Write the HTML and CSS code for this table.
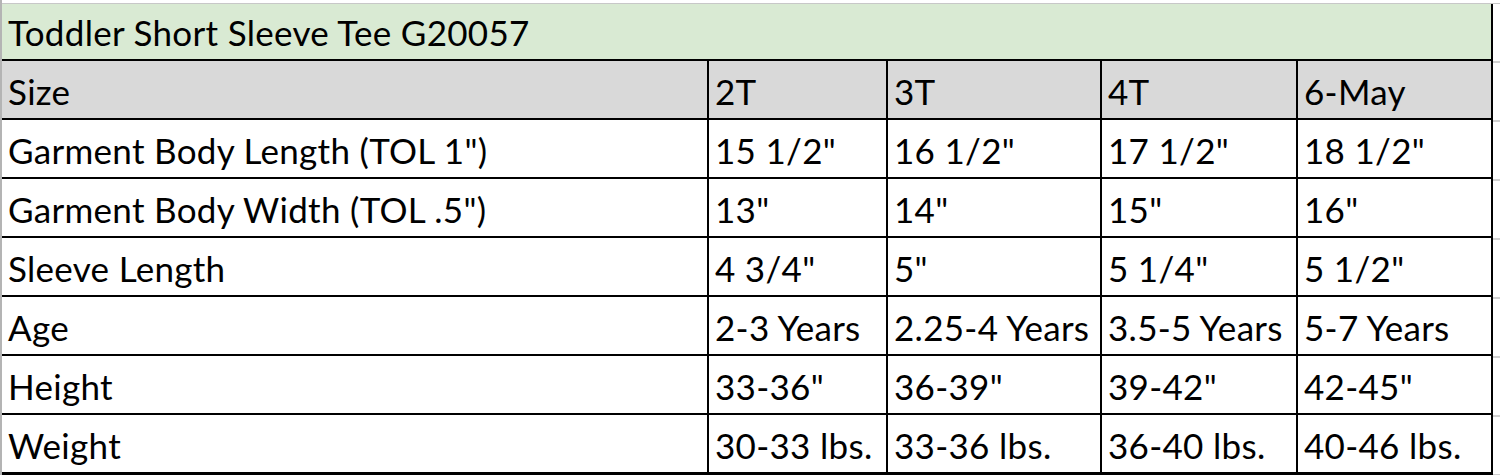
FILE: index.html
```html
<!DOCTYPE html>
<html lang="en">
<head>
    <meta charset="UTF-8">
    <meta name="viewport" content="width=device-width, initial-scale=1.0">
    <link rel="stylesheet" href="styles.css">
    <title>Toddler Short Sleeve Tee G20057</title>
</head>
<body>
    <div class="sheet">
        <div class="grid-top"></div>
        <div class="sheet-body">
            <table class="chart">
                <colgroup>
                    <col class="colLabel">
                    <col class="col2t">
                    <col class="col3t">
                    <col class="col4t">
                    <col class="col6">
                </colgroup>
                <tr class="title-row">
                    <td colspan="5">Toddler Short Sleeve Tee G20057</td>
                </tr>
                <tr class="head-row">
                    <td>Size</td>
                    <td>2T</td>
                    <td>3T</td>
                    <td>4T</td>
                    <td>6-May</td>
                </tr>
                <tr>
                    <td>Garment Body Length (TOL 1")</td>
                    <td>15 1/2"</td>
                    <td>16 1/2"</td>
                    <td>17 1/2"</td>
                    <td>18 1/2"</td>
                </tr>
                <tr>
                    <td>Garment Body Width (TOL .5")</td>
                    <td>13"</td>
                    <td>14"</td>
                    <td>15"</td>
                    <td>16"</td>
                </tr>
                <tr>
                    <td>Sleeve Length</td>
                    <td>4 3/4"</td>
                    <td>5"</td>
                    <td>5 1/4"</td>
                    <td>5 1/2"</td>
                </tr>
                <tr>
                    <td>Age</td>
                    <td>2-3 Years</td>
                    <td>2.25-4 Years</td>
                    <td>3.5-5 Years</td>
                    <td>5-7 Years</td>
                </tr>
                <tr>
                    <td>Height</td>
                    <td>33-36"</td>
                    <td>36-39"</td>
                    <td>39-42"</td>
                    <td>42-45"</td>
                </tr>
                <tr class="last-row">
                    <td>Weight</td>
                    <td>30-33 lbs.</td>
                    <td>33-36 lbs.</td>
                    <td>36-40 lbs.</td>
                    <td>40-46 lbs.</td>
                </tr>
            </table>
            <div class="gutter"></div>
        </div>
    </div>
</body>
</html>
```

FILE: styles.css
```css
body{
    margin: 0;
    padding: 0;
    background-color: #fff;
    font-family: Lato, "Open Sans", sans-serif;
    color: #000;
}
.sheet{
    width: 1500px;
    border-left: 2px solid #b4b4b4;
    box-sizing: border-box;
}
.grid-top{
    height: 3px;
    border-bottom: 1px solid #c8c8c8;
}
.sheet-body{
    display: flex;
}
.chart{
    width: 1490px;
    table-layout: fixed;
    border-collapse: collapse;
}
.colLabel{
    width: 706px;
}
.col2t{
    width: 179px;
}
.col3t{
    width: 214px;
}
.col4t{
    width: 196px;
}
.col6{
    width: 195px;
}
td{
    height: 48px;
    padding: 0 6px 9px 6px;
    border: 2px solid #000;
    vertical-align: bottom;
    font-size: 35px;
    letter-spacing: 0.3px;
    line-height: 1;
    white-space: nowrap;
    overflow: hidden;
}
tr td:first-child{
    border-left: none;
}
.title-row td{
    height: 46px;
    border-top: none;
    background-color: #d9ead3;
}
.head-row td{
    background-color: #d9d9d9;
}
.last-row td{
    border-bottom-width: 4px;
}
.gutter{
    flex: 1;
    background-image: repeating-linear-gradient(to bottom, transparent 0, transparent 57px, #d0d0d0 57px, #d0d0d0 59px);
}
```
